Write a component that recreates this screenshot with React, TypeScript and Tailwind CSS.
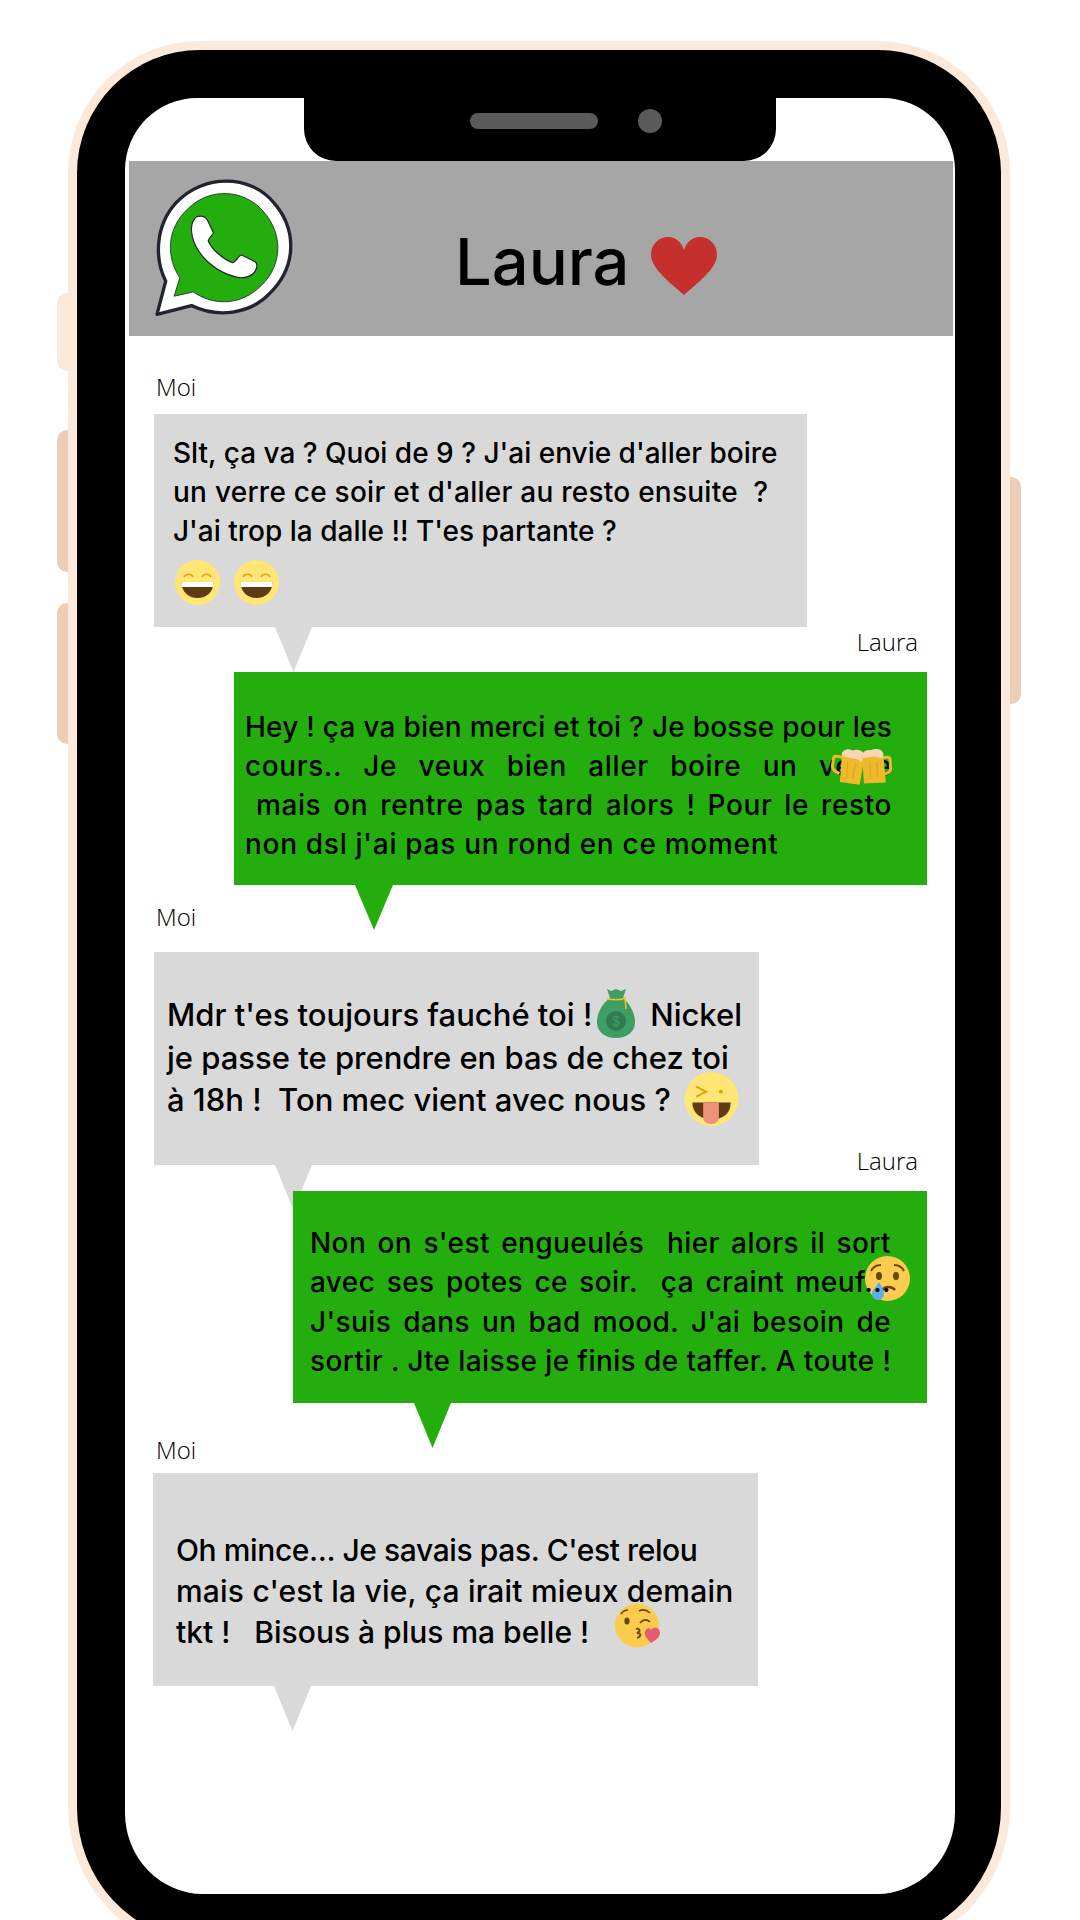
import React from "react";

const Tail = ({ cls }: { cls: string }) => (
  <div className={`absolute top-full [clip-path:polygon(0_0,100%_0,50%_100%)] ${cls}`} />
);

const Label = ({ children, cls }: { children: React.ReactNode; cls: string }) => (
  <div className={`h-[30px] leading-[30px] text-[24px] font-light text-black font-['Open_Sans',sans-serif] ${cls}`}>{children}</div>
);

const Grin = () => (
  <svg viewBox="0 0 45 45" className="w-[45px] h-[45px]">
    <circle cx="22.5" cy="22.5" r="22.5" fill="#ffe675" />
    <path d="M9 17a5 5 0 0 1 9 0M27 17a5 5 0 0 1 9 0" fill="none" stroke="#e0a010" strokeWidth="1.4" />
    <path d="M6.5 22h32c0 10-7 16-16 16s-16-6-16-16z" fill="#5f3a12" />
    <rect x="6.5" y="22" width="32" height="5" fill="#fff" />
  </svg>
);

const Beer = () => (
  <svg viewBox="0 0 62 38" className="w-[62px] h-[38px]">
    <g transform="rotate(8 18 20)">
      <path d="M11 11H5a2.500 2.500 0 0 0-2.500 2.500v8c0 3 4 5 8 6" fill="none" stroke="#eeba2c" strokeWidth="3" />
      <path d="M10 6h23l-1 30H12z" fill="#eeba2c" />
      <path d="M10 9c0-5 5-8 10-6 5-3 12-1 13 4 0 4-2 5-3 7-2-3-4-3-6-3-5-1-10 1-14-2z" fill="#f9d5b5" />
      <path d="M17 15l1 16M25 15l-1 16" stroke="#dea51e" strokeWidth="1.2" />
    </g>
    <g transform="rotate(-3 44 20)">
      <path d="M53 11h5a2.500 2.500 0 0 1 2.500 2.500v9c0 3-4 5-9 6" fill="none" stroke="#eeba2c" strokeWidth="3" />
      <path d="M33 7h21l1 29H33z" fill="#eeba2c" />
      <path d="M33 8c0-4 5-6 9-5 4-2 11-1 12 4l-1 5c-6-3-14-3-20-1z" fill="#f9d5b5" />
      <path d="M40 15v16M47 15v16" stroke="#dea51e" strokeWidth="1.2" />
    </g>
  </svg>
);

const Money = () => (
  <svg viewBox="0 0 38 50" className="w-[38px] h-[50px]">
    <path d="M10 1l4 2 5-2 5 2 5-2-3 9c6 5 12 14 12 24 0 10-8 16-19 16S0 44 0 34c0-10 6-19 13-24z" fill="#3e9e63" />
    <circle cx="19" cy="33" r="10" fill="#2f7d4e" />
    <text x="19" y="38" textAnchor="middle" fontSize="14" fill="#3e9e63" fontFamily="'Liberation Sans',sans-serif">$</text>
    <path d="M10 11c6 1 14 1 18-1l1 11" fill="none" stroke="#f4c61a" strokeWidth="1.6" />
  </svg>
);

const Wink = () => (
  <svg viewBox="0 0 55 55" className="w-[55px] h-[54px]">
    <circle cx="27.5" cy="27.5" r="27.5" fill="#ffe675" />
    <path d="M12 15l10 5-10 5" fill="none" stroke="#e0a010" strokeWidth="2" />
    <circle cx="37" cy="20" r="2" fill="#e0a010" />
    <path d="M8 31h39c0 10-6 17-19 17S8 41 8 31z" fill="#5f3a12" />
    <path d="M19 31h16v14c0 5-3 8-8 8s-8-3-8-8z" fill="#ef907a" />
  </svg>
);

const Cry = () => (
  <svg viewBox="0 0 45 45" className="w-[45px] h-[45px]">
    <circle cx="22.5" cy="22.5" r="22.5" fill="#fdcb4d" />
    <path d="M6 15c2-4 6-6 10-6M29 9c4 0 8 2 10 6" fill="none" stroke="#664500" strokeWidth="1.8" />
    <ellipse cx="14" cy="20" rx="3" ry="4" fill="#664500" />
    <ellipse cx="31" cy="20" rx="3" ry="4" fill="#664500" />
    <path d="M17 34c3-4 10-4 13 0" fill="none" stroke="#664500" strokeWidth="2.5" />
    <path d="M14 26c3 5 5 8 5 12a6 6 0 0 1-12 0c0-4 4-7 7-12z" fill="#5dadec" />
  </svg>
);

const Kiss = () => (
  <svg viewBox="0 0 45 45" className="w-[45px] h-[45px]">
    <circle cx="22" cy="22.5" r="22" fill="#fdcb4d" />
    <path d="M6 11c2-3 4-4 7-4M24 8c4-2 8-1 11 2M25 20c3-4 7-4 10-1" fill="none" stroke="#664500" strokeWidth="1.6" />
    <ellipse cx="12" cy="18" rx="2.600" ry="3.600" fill="#664500" />
    <path d="M21 26c4-1 5 2 1 4 4 0 5 3 0 5" fill="none" stroke="#664500" strokeWidth="1.800" />
    <path d="M36 27c3-4 9-2 9 3 0 5-6 8-9 10-2-3-7-6-6-11 1-4 5-5 6-2z" fill="#e75a70" />
  </svg>
);

const WhatsApp = () => (
  <svg viewBox="346 477 412 412" className="w-[138px] h-[138px]">
    <path d="M352 884 L378 785 C345 720 345 620 410 550 C490 465 630 465 700 550 C770 630 770 740 690 820 C630 885 530 895 455 858 Z" fill="#fff" stroke="#23232f" strokeWidth="10" strokeLinejoin="round" />
    <path d="M403 830 L420 775 C380 715 378 630 445 568 C510 505 610 510 668 575 C735 650 725 750 650 810 C590 860 515 855 460 817 Z" fill="#24ae0e" stroke="#23232f" strokeWidth="2.5" strokeLinejoin="round" />
    <path d="M470 593 C485 588 497 592 503 604 L520 640 C522 645 505 655 505 665 C515 690 550 720 578 730 C588 728 595 708 605 707 L645 727 C652 732 652 745 645 755 C635 772 610 778 590 773 C530 760 470 710 457 650 C452 625 455 605 470 593 Z" fill="#fff" stroke="#23232f" strokeWidth="3.500" />
  </svg>
);

const Heart = () => (
  <svg viewBox="0 0 66 58" className="w-[66px] h-[58px]">
    <path d="M33 58C22 48 0 32 0 18 0 7 8 0 17 0c7 0 13 4 16 13C36 4 42 0 49 0c9 0 17 7 17 18 0 14-22 30-33 40z" fill="#c6302c" />
  </svg>
);

const text = "font-['Inter',sans-serif] font-medium text-black whitespace-nowrap";

export default function App() {
  return (
    <div className="relative w-[1080px] h-[1920px] overflow-hidden bg-white">
      <div className="relative ml-[68px] mt-[41px] inline-block align-top">
        <div className="absolute left-[-11px] top-[252px] w-[14px] h-[78px] rounded-l-[10px] bg-[#fce9da]" />
        <div className="absolute left-[-11px] top-[389px] w-[14px] h-[142px] rounded-l-[10px] bg-[#eccdb5]" />
        <div className="absolute left-[-11px] top-[562px] w-[14px] h-[141px] rounded-l-[10px] bg-[#eccdb5]" />
        <div className="absolute right-[-11px] top-[436px] w-[14px] h-[227px] rounded-r-[10px] bg-[#eccdb5]" />
        <div className="relative w-[942px] h-[1907px] border-[9px] border-[#fce9da] bg-black rounded-[132px_132px_132px_132px/132px_132px_141px_141px] pt-[48px] pl-[48px]">
          <div className="relative w-[830px] h-[1796px] bg-white rounded-[72px_72px_78px_78px/72px_72px_81px_81px]">
            <div className="absolute left-[179px] top-0 w-[472px] h-[63px] bg-black rounded-b-[32px] flex items-start pt-[11px] pl-[166px] gap-[40px]">
              <div className="mt-[4px] w-[128px] h-[16px] rounded-full bg-[#5a5a5a]" />
              <div className="w-[24px] h-[24px] rounded-full bg-[#5a5a5a]" />
            </div>
            <div className="pt-[63px] pl-[4px]">
              <div className="flex items-center w-[824px] h-[175px] bg-[#a6a6a6]">
                <div className="ml-[26px] mt-[-4px]"><WhatsApp /></div>
                <div className={`ml-[162px] text-[65px] leading-none mt-[26px] ${text}`}>Laura</div>
                <div className="ml-[21px] mt-[35px]"><Heart /></div>
              </div>
            </div>

            <Label cls="mt-[36px] ml-[31px]">Moi</Label>
            <div className={`relative ml-[29px] mt-[12px] w-[653px] h-[213px] bg-[#d9d9d9] pl-[19px] pt-[20px] text-[28px] leading-[39px] ${text}`}>
              <div>Slt, ça va ? Quoi de 9 ? J'ai envie d'aller boire</div>
              <div className="tracking-[0.25px]">un verre ce soir et d'aller au resto ensuite&nbsp; ?</div>
              <div>J'ai trop la dalle ‼ T'es partante ?</div>
              <div className="flex gap-[14px] ml-[2px] mt-[9px]"><Grin /><Grin /></div>
              <Tail cls="left-[121px] w-[37px] h-[45px] bg-[#d9d9d9]" />
            </div>

            <Label cls="text-right pr-[37px]">Laura</Label>
            <div className={`relative z-10 ml-[109px] mt-[15px] w-[693px] h-[213px] bg-[#24ae0e] pl-[11px] pr-[35px] pt-[36px] text-[28px] leading-[39px] ${text}`}>
              <div className="[text-align-last:justify] tracking-[0.2px]">Hey ! ça va bien merci et toi ? Je bosse pour les</div>
              <div className="[text-align-last:justify] tracking-[0.6px]">cours.. Je veux bien aller boire un verre</div>
              <div className="[text-align-last:justify] tracking-[0.6px] pl-[11px]">mais on rentre pas tard alors ! Pour le resto</div>
              <div className="tracking-[0.7px]">non dsl j'ai pas un rond en ce moment</div>
              <div className="absolute left-[596px] top-[75px]"><Beer /></div>
              <Tail cls="left-[121px] w-[38px] h-[45px] bg-[#24ae0e]" />
            </div>

            <Label cls="mt-[17px] ml-[31px]">Moi</Label>
            <div className={`relative ml-[29px] mt-[20px] w-[605px] h-[213px] bg-[#d9d9d9] pl-[13px] pt-[42px] text-[31px] leading-[42.5px] ${text}`}>
              <div className="flex items-start w-[575px] h-[42.5px]">
                <span>Mdr t'es toujours fauché toi !</span>
                <span className="ml-[5px] mt-[-6px]"><Money /></span>
                <span className="ml-auto">Nickel</span>
              </div>
              <div>je passe te prendre en bas de chez toi</div>
              <div className="flex items-start justify-between w-[572px] h-[42.5px]">
                <span>à 18h !&nbsp; Ton mec vient avec nous ?</span>
                <span className="mt-[-7px]"><Wink /></span>
              </div>
              <Tail cls="left-[121px] w-[37px] h-[45px] bg-[#d9d9d9]" />
            </div>

            <Label cls="text-right pr-[37px] mt-[-19px]">Laura</Label>
            <div className={`relative z-10 ml-[168px] mt-[15px] w-[634px] h-[212px] bg-[#24ae0e] pl-[17px] pr-[36px] pt-[33px] text-[28px] tracking-[0.4px] leading-[39.3px] ${text}`}>
              <div className="absolute left-[572px] top-[65px]"><Cry /></div>
              <div className="relative [text-align-last:justify]">Non on s'est engueulés&nbsp; hier alors il sort</div>
              <div className="relative [text-align-last:justify]">avec ses potes ce soir.&nbsp; ça craint meuf...</div>
              <div className="relative [text-align-last:justify]">J'suis dans un bad mood. J'ai besoin de</div>
              <div className="relative">sortir . Jte laisse je finis de taffer. A toute !</div>
              <Tail cls="left-[121px] w-[37px] h-[45px] bg-[#24ae0e]" />
            </div>

            <Label cls="mt-[32px] ml-[31px]">Moi</Label>
            <div className={`relative ml-[28px] mt-[8px] w-[605px] h-[213px] bg-[#d9d9d9] pl-[23px] pt-[57px] text-[30px] leading-[41px] ${text}`}>
              <div className="tracking-[-0.4px]">Oh mince... Je savais pas. C'est relou</div>
              <div className="tracking-[0.2px]">mais c'est la vie, ça irait mieux demain</div>
              <div className="flex items-start justify-between w-[484px] h-[41px]">
                <span>tkt !&nbsp;&nbsp; Bisous à plus ma belle !</span>
                <span className="mt-[-9px]"><Kiss /></span>
              </div>
              <Tail cls="left-[121px] w-[37px] h-[45px] bg-[#d9d9d9]" />
            </div>
          </div>
        </div>
      </div>
    </div>
  );
}
